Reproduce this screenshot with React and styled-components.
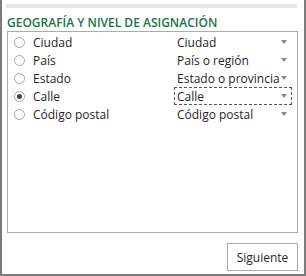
import React from 'react';
import styled, { createGlobalStyle } from 'styled-components';

const Global = createGlobalStyle`
body {
  margin: 0;
  background: #ffffff;
  font-family: "Open Sans", "Noto Sans", sans-serif;
}
`;

const Frame = styled.div`
width: 306px;
height: 276px;
box-sizing: border-box;
border-left: 2px solid #7b7b7b;
border-right: 2px solid #7b7b7b;
border-bottom: 2px solid #7b7b7b;
padding: 4px 6px 0 5px;
display: flex;
flex-direction: column;
background: #ffffff;
`;

const TopBar = styled.div`
height: 4px;
margin: 0 1px 0 -1px;
background: #e6e6e6;
`;

const Heading = styled.div`
margin-top: 7px;
height: 16px;
font-family: "Open Sans", sans-serif;
font-weight: 600;
font-size: 12px;
line-height: 16px;
color: #217346;
`;

const ListBox = styled.div`
height: 202px;
box-sizing: border-box;
border: 1px solid #ababab;
padding: 1px 0 0 0;
`;

const Row = styled.div`
display: flex;
align-items: center;
height: 18px;
`;

const Option = styled.label`
display: flex;
align-items: center;
width: 166px;
font-size: 12px;
color: #262626;
`;

const Radio = styled.span`
width: 11px;
height: 11px;
box-sizing: border-box;
border: 1px solid #a6a6a6;
border-radius: 50%;
margin: 0 8px 0 6px;
display: flex;
align-items: center;
justify-content: center;
&::after {
  content: '';
  width: 5px;
  height: 5px;
  border-radius: 50%;
  background: ${props => (props.checked ? '#444444' : 'transparent')};
}
`;

const Select = styled.div`
display: flex;
align-items: center;
justify-content: space-between;
width: 118px;
height: 18px;
box-sizing: border-box;
padding: 0 4px 0 2px;
border: 1px ${props => (props.focused ? 'dashed #555555' : 'solid transparent')};
font-size: 12px;
color: #262626;
white-space: nowrap;
`;

const Arrow = styled.span`
width: 0;
height: 0;
border-left: 3px solid transparent;
border-right: 3px solid transparent;
border-top: 4px solid #8a8a8a;
`;

const Footer = styled.div`
display: flex;
justify-content: flex-end;
padding-top: 10px;
`;

const Button = styled.button`
width: 71px;
height: 28px;
box-sizing: border-box;
border: 1px solid #ababab;
background: #ffffff;
font-family: "Open Sans", sans-serif;
font-size: 12px;
color: #262626;
padding: 0;
`;

const rows = [
  { label: 'Ciudad', value: 'Ciudad' },
  { label: 'País', value: 'País o región' },
  { label: 'Estado', value: 'Estado o provincia' },
  { label: 'Calle', value: 'Calle', checked: true },
  { label: 'Código postal', value: 'Código postal' },
];

export default function App() {
  return (
    <>
      <Global />
      <Frame>
        <TopBar />
        <Heading>GEOGRAFÍA Y NIVEL DE ASIGNACIÓN</Heading>
        <ListBox>
          {rows.map(r => (
            <Row key={r.label}>
              <Option>
                <Radio checked={r.checked} />
                {r.label}
              </Option>
              <Select focused={r.checked}>
                {r.value}
                <Arrow />
              </Select>
            </Row>
          ))}
        </ListBox>
        <Footer>
          <Button>Siguiente</Button>
        </Footer>
      </Frame>
    </>
  );
}
